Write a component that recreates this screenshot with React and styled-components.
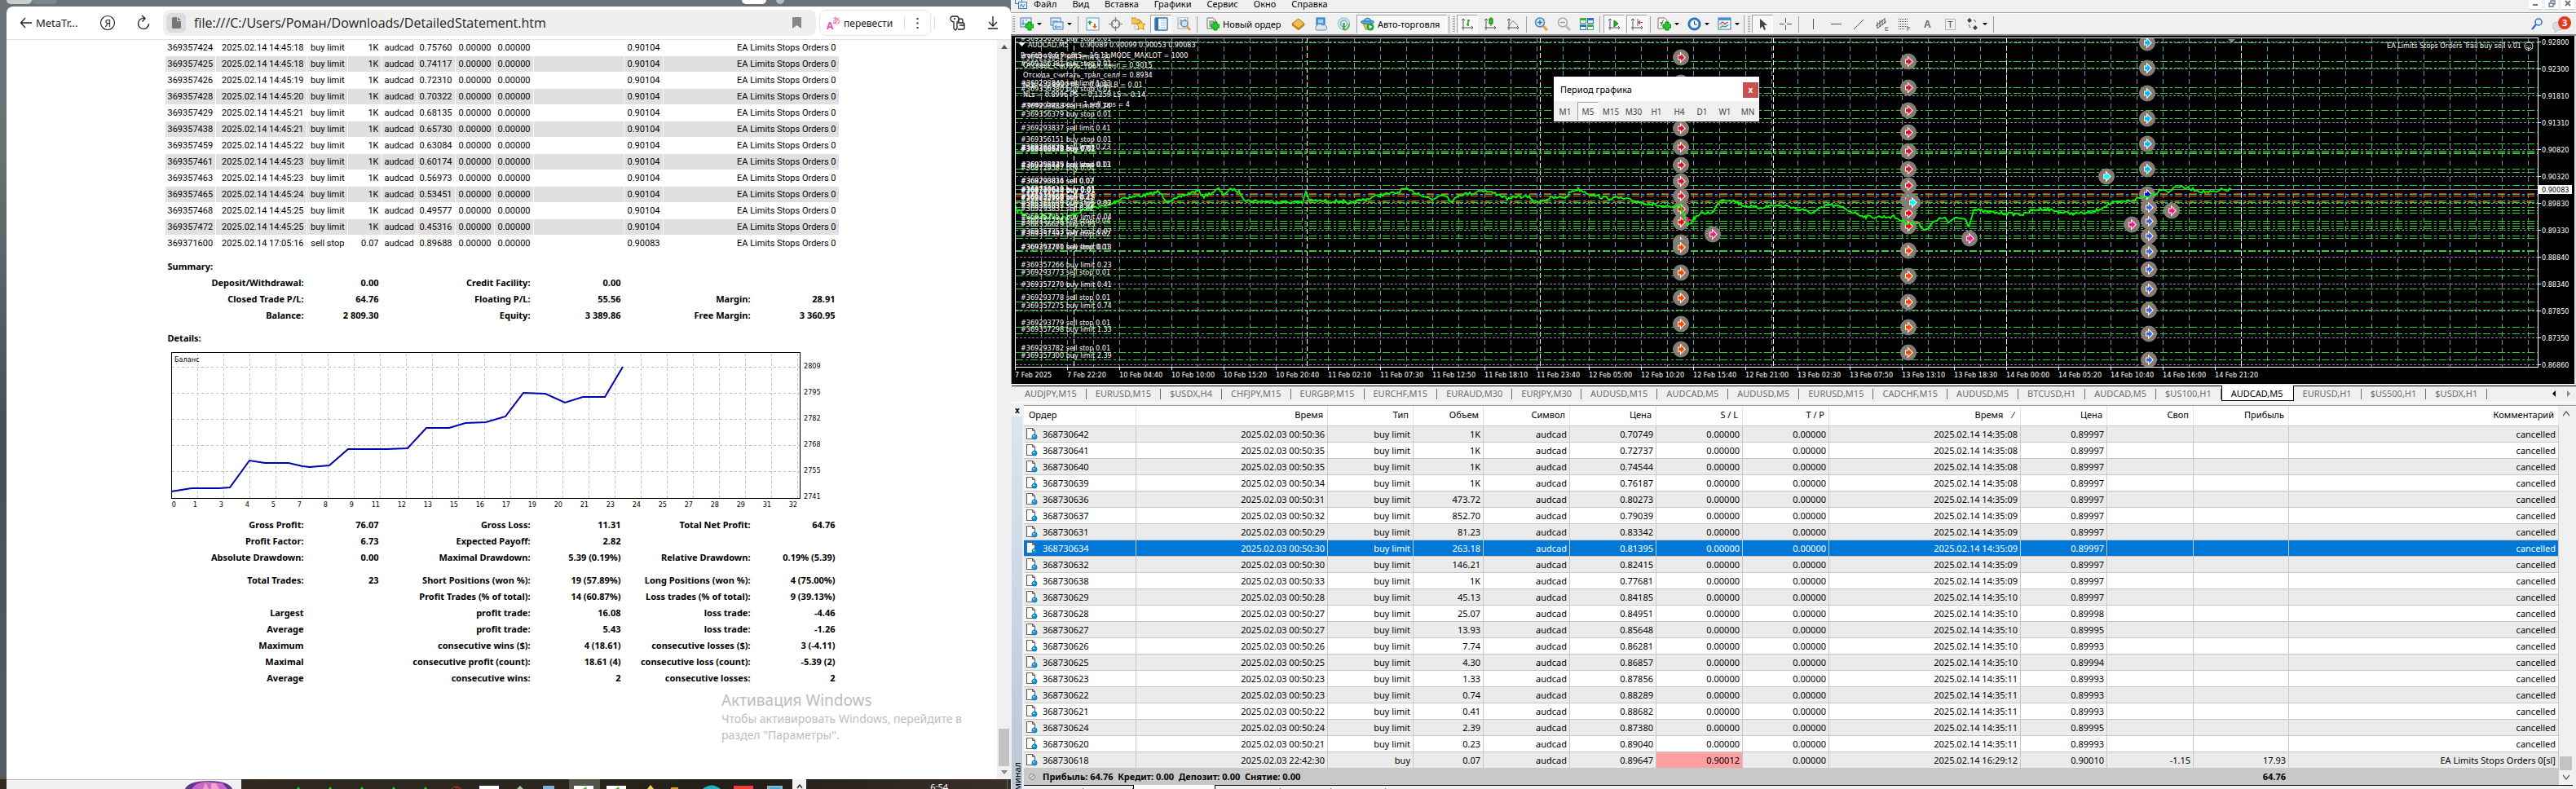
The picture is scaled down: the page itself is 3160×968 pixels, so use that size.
import React from "react";
import styled, { createGlobalStyle } from "styled-components";

const UI = `"Noto Sans", "Open Sans", sans-serif`;
const REPORT = `Roboto, "Liberation Sans", sans-serif`;
const TAHOMA = `"DejaVu Sans Condensed", "DejaVu Sans", sans-serif`;

const GlobalStyle = createGlobalStyle`
  * {
    box-sizing: border-box;
  }
  body {
    margin: 0;
    font-family: ${UI};
    font-size: 11px;
    color: #000;
    background: #f0f0f0;
  }
  button {
    font: inherit;
    color: inherit;
    background: none;
    border: 0;
    padding: 0;
  }
  svg {
    display: block;
    flex: none;
  }
`;

const Desktop = styled.div`
  display: flex;
  height: 100vh;
  overflow: hidden;
`;

/* ---------- browser ---------- */

const BrowserPane = styled.section`
  flex: 31 1 0;
  min-width: 0;
  position: relative;
  display: flex;
  flex-direction: column;
  background: linear-gradient(#6b7379, #6a7071 20%, #474e55 55%, #555c62);
`;

const TabStrip = styled.div`
  height: 8px;
  padding-left: 8px;
  display: flex;
  align-items: flex-start;
`;

const TabStub = styled.div`
  width: ${(p) => p.$w}px;
  height: 5px;
  margin-left: ${(p) => p.$gap || 0}px;
  border-radius: 0 0 6px 6px;
  background: ${(p) => p.$bg};
`;

const BrowserWindow = styled.div`
  flex: 1;
  min-height: 0;
  margin-left: 8px;
  display: flex;
  flex-direction: column;
  background: #fff;
  border-radius: 8px 8px 0 0;
`;

const AddressRow = styled.header`
  display: flex;
  align-items: center;
  height: 41px;
  padding: 0 15px 0 16px;
  border-bottom: 1px solid #e2e2e2;
`;

const BackLink = styled.a`
  display: flex;
  align-items: center;
  gap: 4px;
  width: 98px;
  font-size: 13px;
  color: #222;
  text-decoration: none;
`;

const NavButton = styled.button`
  display: flex;
  align-items: center;
  width: ${(p) => p.$w || 44}px;
`;

const AddressBar = styled.label`
  flex: 1;
  min-width: 0;
  display: flex;
  align-items: center;
  height: 32px;
  padding: 0 18px 0 4px;
  border-radius: 8px;
  background: #efefef;
`;

const FileBadge = styled.span`
  display: flex;
  align-items: center;
  justify-content: center;
  width: 24px;
  height: 24px;
  margin-right: 10px;
  border-radius: 6px;
  background: #dbdbdb;
`;

const AddressInput = styled.input`
  flex: 1;
  min-width: 0;
  height: 28px;
  padding: 0;
  border: 0;
  outline: 0;
  background: none;
  font-family: "Open Sans", "Noto Sans", sans-serif;
  font-size: 16px;
  color: #222;
`;

const TranslateBox = styled.div`
  display: flex;
  align-items: center;
  width: 137px;
  height: 32px;
  margin: 0 4px;
  padding-left: 8px;
  border: 1px solid #e4e4e4;
  border-radius: 8px;
`;

const TranslateButton = styled.button`
  display: flex;
  align-items: center;
  gap: 4px;
  width: 95px;
  font-size: 12px;
  color: #222;
`;

const MoreButton = styled.button`
  display: flex;
  justify-content: center;
  flex: 1;
  height: 18px;
  align-items: center;
  border-left: 1px solid #e0e0e0;
`;

const BarRule = styled.span`
  width: 1px;
  height: 16px;
  margin-right: 18px;
  background: #dcdcdc;
`;

const PageArea = styled.div`
  flex: 1;
  min-height: 0;
  display: flex;
`;

const PageBody = styled.main`
  flex: 1;
  min-width: 0;
  overflow: hidden;
`;

const Report = styled.div`
  width: 828px;
  margin: -1px auto 0;
  font-family: ${REPORT};
`;

const OrdersTable = styled.table`
  width: 100%;
  table-layout: fixed;
  border-spacing: 1px;
  text-align: right;
  td {
    height: 19px;
    padding: 0 3px;
    line-height: 19px;
    white-space: nowrap;
  }
  tr:nth-child(even) td {
    background: #e0e0e0;
  }
`;

const SectionTitle = styled.h2`
  margin: 8px 0 0;
  padding-left: 4px;
  font: bold 11px/20px ${UI};
`;

const StatsTable = styled.table`
  width: 826px;
  margin: ${(p) => (p.$spaced ? 8 : 0)}px 1px 0;
  table-layout: fixed;
  border-collapse: collapse;
  text-align: right;
  font: bold 11px/20px ${UI};
  td {
    height: 20px;
    padding: 0 4px 0 0;
    white-space: nowrap;
  }
`;

const BalanceSvg = styled.svg`
  width: 826px;
  margin-left: 1px;
  font: 9px ${TAHOMA};
`;

const ScrollTrack = styled.div`
  width: ${(p) => p.$w}px;
  display: flex;
  flex-direction: column;
  align-items: center;
  justify-content: space-between;
  padding: ${(p) => p.$pad}px 0;
  background: #f0f0f0;
`;

const ScrollEnd = styled.div`
  display: flex;
  flex-direction: column;
  align-items: center;
  gap: 5px;
`;

const ScrollThumb = styled.div`
  width: ${(p) => p.$w}px;
  height: ${(p) => p.$h}px;
  background: #c3c3c3;
`;

const Watermark = styled.div`
  position: absolute;
  left: 885px;
  bottom: 56px;
  color: #bdbdbd;
  font-size: 14px;
  line-height: 20px;
  white-space: nowrap;
`;

const WatermarkTitle = styled.div`
  font-size: 19px;
  line-height: 26px;
`;

const Taskbar = styled.footer`
  display: flex;
  height: 12px;
  overflow: hidden;
  background: linear-gradient(90deg, #35281f, #2b261f 50%, #231f18 75%, #3a2f28);
`;

const SearchPanel = styled.div`
  width: 288px;
  margin-left: 8px;
  padding-left: 219px;
  border-top: 1px solid #b5b5b5;
  background: #f1f1f1;
`;

const TaskIcons = styled.svg`
  flex: 1;
  width: 100%;
  min-width: 0;
`;

const Tray = styled.div`
  width: 268px;
  display: flex;
  color: #fff;
`;

const TrayToggle = styled.button`
  width: 17px;
  display: flex;
  justify-content: center;
  padding-top: 5px;
  background: #f1f1f1;
`;

const Clock = styled.time`
  flex: 1;
  padding: 2px 72px 0 0;
  text-align: right;
  line-height: 16px;
  margin-right: 4px;
  border-right: 1px solid #6d665f;
`;

/* ---------- terminal ---------- */

const TradePane = styled.section`
  flex: 48 1 0;
  min-width: 0;
  display: flex;
  flex-direction: column;
  background: #f0f0f0;
`;

const MenuBar = styled.nav`
  display: flex;
  align-items: center;
  gap: 8px;
  height: 16px;
  padding: 0 2px 6px 5px;
  overflow: hidden;
  border-bottom: 1px solid #a0a0a0;
`;

const MenuItems = styled.div`
  display: flex;
  gap: 19px;
`;

const MenuButton = styled.button`
  line-height: 14px;
`;

const WindowButtons = styled.div`
  display: flex;
  gap: 4px;
  margin-left: auto;
`;

const WindowButton = styled.button`
  display: flex;
  align-items: center;
  justify-content: center;
  width: 16px;
  height: 14px;
  background: #fff;
  border-bottom: 1px solid #d0d0d0;
`;

const ToolRow = styled.div`
  display: flex;
  align-items: center;
  height: 28px;
  border-top: 1px solid #fff;
  border-bottom: 2px solid #808080;
`;

const Grip = styled.span`
  width: ${(p) => (p.$line ? 9 : 6)}px;
  height: 22px;
  border-left: ${(p) => (p.$line ? "1px solid #a0a0a0" : "0")};
  background: repeating-linear-gradient(#a8a8a8 0 1px, transparent 1px 2px)
    ${(p) => (p.$line ? 4 : 2)}px 1px / 3px 20px no-repeat;
`;

const Separator = styled.span`
  width: 6px;
  height: 20px;
  background: linear-gradient(#a0a0a0, #a0a0a0) 2px 0 / 1px 100% no-repeat;
`;

const ToolButton = styled.button`
  display: flex;
  align-items: center;
  justify-content: center;
  width: 26px;
  height: 23px;
  margin: 0 1px;
  border: 1px solid;
  border-color: ${(p) =>
    p.$on ? "#a0a0a0 #fff #fff #a0a0a0" : "transparent"};
  background: ${(p) => (p.$on ? "#f8f8f8" : "none")};
`;

const DropButton = styled.button`
  display: flex;
  align-items: center;
  gap: 4px;
  width: 37px;
  padding-left: 5px;
`;

const TextButton = styled.button`
  display: flex;
  align-items: center;
  gap: 4px;
  height: 23px;
  width: ${(p) => p.$w}px;
  margin: 0 2px;
  padding-left: 4px;
  white-space: nowrap;
  border: 1px solid;
  border-color: ${(p) =>
    p.$on ? "#a0a0a0 #fff #fff #a0a0a0" : "transparent"};
  background: ${(p) => (p.$on ? "#f8f8f8" : "none")};
`;

const ToolRight = styled.div`
  display: flex;
  gap: 12px;
  margin: 0 6px 0 auto;
`;

const ChartArea = styled.div`
  position: relative;
  background: #000;
  border-left: 1px solid #a0a0a0;
  border-right: 2px solid #e3e3e3;
`;

const ChartSvg = styled.svg`
  width: 100%;
  font: 9px ${TAHOMA};
`;

const PeriodWindow = styled.div`
  position: absolute;
  left: 665px;
  top: 50px;
  width: 252px;
  background: #f0f0f0;
`;

const PeriodTitle = styled.div`
  display: flex;
  align-items: center;
  justify-content: space-between;
  height: 30px;
  padding: 0 1px 0 8px;
  background: #fff;
`;

const CloseButton = styled.button`
  width: 19px;
  height: 19px;
  margin-top: 3px;
  font: bold 10px/17px ${TAHOMA};
  color: #fff;
  background: #c75050;
`;

const PeriodRow = styled.div`
  display: grid;
  grid-template-columns: repeat(9, 1fr);
  height: 25px;
  padding: 1px 0;
`;

const PeriodButton = styled.button`
  margin: 0 1px;
  font-size: 10px;
  color: #444;
  border: 1px solid;
  border-color: ${(p) =>
    p.$on ? "#a0a0a0 #fff #fff #a0a0a0" : "transparent"};
  background: ${(p) => (p.$on ? "#f8f8f8" : "none")};
`;

const ChartTabs = styled.div`
  display: flex;
  align-items: stretch;
  height: 23px;
  margin-left: 1px;
  padding: 2px 7px 1px 5px;
  border-bottom: 1px solid #fff;
  background: linear-gradient(#000, #000) 0 2px / 100% 1px no-repeat;
`;

const ChartTab = styled.button`
  padding: 0 12px 0 11px;
  color: ${(p) => (p.$on ? "#000" : "#6d6d6d")};
  background: ${(p) =>
    p.$on
      ? "#fff"
      : "linear-gradient(#6d6d6d, #6d6d6d) 100% 4px / 1px 13px no-repeat"};
  border: ${(p) => (p.$on ? "1px solid #000" : "0")};
  border-top: 0;
`;

const TabScroll = styled.div`
  display: flex;
  align-items: center;
  gap: 14px;
  margin-left: auto;
`;

const TerminalBox = styled.div`
  flex: 1;
  min-height: 0;
  display: flex;
  padding-top: 3px;
`;

const SideTitle = styled.div`
  width: 16px;
  display: flex;
  flex-direction: column;
`;

const SideClose = styled.button`
  height: 14px;
  font: bold 10px/10px ${TAHOMA};
`;

const SideLabel = styled.div`
  flex: 1;
  display: flex;
  align-items: center;
  justify-content: flex-end;
  margin: 0 2px 0 1px;
  padding-bottom: 424px;
  writing-mode: vertical-rl;
  transform: rotate(180deg);
  overflow: hidden;
  white-space: nowrap;
  background: linear-gradient(0deg, #d9e5f3, #b9c7d6);
`;

const TerminalMain = styled.div`
  flex: 1;
  min-width: 0;
  border-top: 1px solid #a0a0a0;
`;

const TerminalBody = styled.div`
  display: flex;
  margin-right: 4px;
  border-bottom: 1px solid #000;
`;

const HistoryTable = styled.table`
  flex: 1;
  min-width: 0;
  table-layout: fixed;
  border-collapse: separate;
  border-spacing: 0;
  text-align: right;
  th,
  td {
    overflow: hidden;
    white-space: nowrap;
    border-right: 1px solid #c8c8c8;
    border-bottom: 1px solid #c8c8c8;
  }
  th {
    height: 25px;
    padding: 0 5px 0 6px;
    line-height: 22px;
    font-weight: normal;
    vertical-align: top;
    background: #fff;
    border-right-color: #e5e5e5;
  }
  th:first-child {
    text-align: left;
  }
  td {
    height: 20px;
    padding: 0 3px 1px 2px;
    line-height: 17px;
  }
  tfoot td {
    font-weight: bold;
    background: #c8c8c8;
  }
`;

const HistoryRow = styled.tr`
  color: ${(p) => (p.$selected ? "#fff" : "#000")};
  background: ${(p) => (p.$selected ? "#0078d7" : "#fff")};
  &:nth-child(odd) {
    background: #ebebeb;
  }
`;

const StopCell = styled.td`
  background: ${(p) => (p.$hit ? "#ffa0a0" : "none")};
`;

const OrderId = styled.span`
  display: flex;
  align-items: center;
  gap: 6px;
`;

const BottomTabs = styled.div`
  display: flex;
  height: 12px;
`;

const BottomTab = styled.button`
  width: ${(p) => p.$w}px;
  margin-top: ${(p) => (p.$on ? -1 : 0)}px;
  background: ${(p) =>
    p.$on
      ? "#fff"
      : "linear-gradient(#6d6d6d, #6d6d6d) 100% 3px / 1px 10px no-repeat"};
  border: solid #000;
  border-width: ${(p) => (p.$on ? "0 1px" : "0")};
`;

/* ---------- data ---------- */

const reportRows = [
  ["369357424", "14:45:18", "0.75760"],
  ["369357425", "14:45:18", "0.74117"],
  ["369357426", "14:45:19", "0.72310"],
  ["369357428", "14:45:20", "0.70322"],
  ["369357429", "14:45:21", "0.68135"],
  ["369357438", "14:45:21", "0.65730"],
  ["369357459", "14:45:22", "0.63084"],
  ["369357461", "14:45:23", "0.60174"],
  ["369357463", "14:45:23", "0.56973"],
  ["369357465", "14:45:24", "0.53451"],
  ["369357468", "14:45:25", "0.49577"],
  ["369357472", "14:45:25", "0.45316"],
  ["369371600", "17:05:16", "0.89688", "sell stop", "0.07", "0.90083"],
];
const reportCols = [61, 111, 49, 41, 42, 46, 47, 47, 110, 47, 215];
const statCols = [174, 92, 186, 111, 159, 104];

const summary = [
  ["Deposit/Withdrawal:", "0.00", "Credit Facility:", "0.00", "", ""],
  ["Closed Trade P/L:", "64.76", "Floating P/L:", "55.56", "Margin:", "28.91"],
  ["Balance:", "2 809.30", "Equity:", "3 389.86", "Free Margin:", "3 360.95"],
];
const profit = [
  ["Gross Profit:", "76.07", "Gross Loss:", "11.31", "Total Net Profit:", "64.76"],
  ["Profit Factor:", "6.73", "Expected Payoff:", "2.82", "", ""],
  ["Absolute Drawdown:", "0.00", "Maximal Drawdown:", "5.39 (0.19%)", "Relative Drawdown:", "0.19% (5.39)"],
];
const trades = [
  ["Total Trades:", "23", "Short Positions (won %):", "19 (57.89%)", "Long Positions (won %):", "4 (75.00%)"],
  ["", "", "Profit Trades (% of total):", "14 (60.87%)", "Loss trades (% of total):", "9 (39.13%)"],
  ["Largest", "", "profit trade:", "16.08", "loss trade:", "-4.46"],
  ["Average", "", "profit trade:", "5.43", "loss trade:", "-1.26"],
  ["Maximum", "", "consecutive wins ($):", "4 (18.61)", "consecutive losses ($):", "3 (-4.11)"],
  ["Maximal", "", "consecutive profit (count):", "18.61 (4)", "consecutive loss (count):", "-5.39 (2)"],
  ["Average", "", "consecutive wins:", "2", "consecutive losses:", "2"],
];

const balanceTicks = [1, 3, 4, 5, 7, 8, 9, 11, 12, 13, 15, 16, 17, 19, 20, 21, 23, 24, 25, 27, 28, 29, 31, 32];
const balanceLevels = [2809, 2795, 2782, 2768, 2755, 2741];
const balanceLine =
  "7,178 32,174 66,174 79,173 103,140 122,143 151,143 168,147 177,148 201,146 224,126 271,126 297,125 320,100 348,100 368,94 393,93 417,86 439,57 466,58 490,69 512,62 539,62 561,25";

const menus = ["Файл", "Вид", "Вставка", "Графики", "Сервис", "Окно", "Справка"];
const periods = ["M1", "M5", "M15", "M30", "H1", "H4", "D1", "W1", "MN"];
const chartTabs = [
  "AUDJPY,M15", "EURUSD,M15", "$USDX,H4", "CHFJPY,M15", "EURGBP,M15", "EURCHF,M15", "EURAUD,M30",
  "EURJPY,M30", "AUDUSD,M15", "AUDCAD,M5", "AUDUSD,M5", "EURUSD,M15", "CADCHF,M15", "AUDUSD,M5",
  "BTCUSD,H1", "AUDCAD,M5", "$US100,H1", "AUDCAD,M5", "EURUSD,H1", "$US500,H1", "$USDX,H1",
];
const activeTab = 17;

const timeLabels = [
  "7 Feb 2025", "7 Feb 22:20", "10 Feb 04:40", "10 Feb 10:00", "10 Feb 15:20", "10 Feb 20:40",
  "11 Feb 02:10", "11 Feb 07:30", "11 Feb 12:50", "11 Feb 18:10", "11 Feb 23:40", "12 Feb 05:00",
  "12 Feb 10:20", "12 Feb 15:40", "12 Feb 21:00", "13 Feb 02:30", "13 Feb 07:50", "13 Feb 13:10",
  "13 Feb 18:30", "14 Feb 00:00", "14 Feb 05:20", "14 Feb 10:40", "14 Feb 16:00", "14 Feb 21:20",
];
const priceLabels = [
  "0.92800", "0.92300", "0.91810", "0.91310", "0.90820", "0.90320", "0.89830",
  "0.89330", "0.88840", "0.88340", "0.87850", "0.87350", "0.86860",
];
const daySeparators = [77, 363, 649, 935, 1221, 1509];

const orderLevels = [
  8, 31, 39, 63, 70, 91, 101, 118, 132, 141, 143, 144, 163, 167, 183, 194, 202, 204, 210, 214, 217, 227,
  230, 233, 236, 245, 248, 263, 264, 286, 294, 310, 326, 336, 357, 365, 388, 397,
];
const stopLevels = [
  [193, "#ff2000", "9 9", 0],
  [195, "#0000ff", "5 13", 8],
  [196, "#ff4500", "9 3 3 3", 0],
  [203, "#e02000", "9 9", 4],
];

const orderLabels = [
  [6, "#369356382 buy stop 0.01"],
  [29, "#369293842 sell limit 2.39"],
  [37, "#369356381 buy stop 0.01"],
  [61, "#369293840 sell limit 1.33"],
  [68, "#369356380 buy stop 0.01"],
  [89, "#369293838 sell limit 0.74"],
  [99, "#369356379 buy stop 0.01"],
  [116, "#369293837 sell limit 0.41"],
  [130, "#369356151 buy stop 0.01"],
  [139, "#369293836 sell limit 0.23"],
  [141, "#368360578 buy 0.02"],
  [142, "#368486648 buy 0.01"],
  [161, "#369293835 sell limit 0.13"],
  [161, "#369356149 buy stop 0.01"],
  [165, "#368729587 buy 0.01"],
  [181, "#369293834 sell 0.07"],
  [181, "#368790816 sell 0.02"],
  [191, "#368730619 buy 0.01"],
  [192, "#368720548 buy 0.01"],
  [193, "#368361644 buy 0.01"],
  [200, "#368799688 sell 0.23"],
  [201, "#369033869 buy 0.13"],
  [202, "#368444168 sell 0.41"],
  [208, "#368361680 buy stop 0.02"],
  [211, "#368360033 sell 0.02"],
  [215, "#369293831 sell 0.02"],
  [225, "#369357252 buy limit 0.04"],
  [230, "#369357254 sell stop 0.04"],
  [234, "#368356629 buy 0.13"],
  [243, "#369357253 buy limit 0.07"],
  [246, "#369357392 sell stop 0.02"],
  [262, "#369293771 sell stop 0.01"],
  [262, "#369357260 buy limit 0.13"],
  [284, "#369357266 buy limit 0.23"],
  [293, "#369293773 sell stop 0.01"],
  [308, "#369357270 buy limit 0.41"],
  [324, "#369293778 sell stop 0.01"],
  [334, "#369357275 buy limit 0.74"],
  [355, "#369293779 sell stop 0.01"],
  [363, "#369357298 buy limit 1.33"],
  [386, "#369293782 sell stop 0.01"],
  [395, "#369357300 buy limit 2.39"],
];
const commentLines = [
  [11, 27, "ProfitB=0.6 ProfitS=-16.11 MODE_MAXLOT = 1000"],
  [14, 39, "Отсюда_считать_трал_лонг = 0.9015"],
  [14, 51, "Отсюда_считать_трал_селл = 0.8934"],
  [14, 63, "NLb = 0.8999 PB = 0.009 LB = 0.01"],
  [14, 75, "NLs = 0.8996 PS = 0.1259 LS = 0.14"],
  [14, 87, "колво_buy_pos = 1 sell_pos  = 4"],
];

const CRIMSON = "#dc143c";
const RED = "#ff0000";
const ORANGE = "#ff4500";
const PINK = "#ff1493";
const SKY = "#00bfff";
const CYAN = "#00ffff";
const ROYAL = "#4169e1";

const column = (x, color, ys) => ys.map((y) => [x, y, color]);
const markers = [
  ...column(821, CRIMSON, [26, 57, 86, 113, 136, 158, 178, 196]),
  ...column(821, RED, [212, 228]),
  [821, 253, PINK],
  ...column(821, ORANGE, [259, 290, 321, 353, 384]),
  [860, 243, PINK],
  ...column(1100, CRIMSON, [31, 63, 91, 118, 141, 163, 183, 201]),
  ...column(1100, RED, [217, 233]),
  ...column(1100, ORANGE, [263, 294, 326, 357, 388]),
  [1105, 204, CYAN],
  [1175, 248, PINK],
  ...column(1393, SKY, [8, 39, 70, 101, 132, 163]),
  [1393, 194, "#0000ff"],
  ...column(1395, ROYAL, [210, 227, 245, 264, 286, 310, 336, 365, 397]),
  [1343, 172, CYAN],
  [1423, 214, PINK],
  [1374, 231, PINK],
];

const pricePoints = [
  [5, 212], [15, 219], [24, 223], [36, 222], [53, 221], [68, 224], [78, 218], [91, 213], [100, 210],
  [116, 209], [127, 204], [135, 199], [152, 197], [167, 195], [180, 191], [190, 202], [200, 201],
  [213, 195], [228, 190], [236, 197], [254, 188], [259, 194], [271, 188], [280, 192], [287, 202],
  [310, 203], [339, 204], [357, 204], [361, 190], [365, 202], [390, 203], [407, 203], [413, 208],
  [419, 204], [436, 200], [453, 195], [472, 193], [480, 188], [499, 193], [516, 201], [529, 193],
  [541, 204], [548, 195], [567, 193], [575, 189], [596, 194], [611, 201], [617, 197], [636, 198],
  [642, 204], [661, 199], [680, 198], [686, 191], [695, 188], [712, 195], [728, 199], [745, 199],
  [766, 203], [787, 207], [808, 211], [821, 209], [829, 233], [838, 223], [846, 218], [861, 216],
  [869, 201], [882, 201], [897, 208], [916, 211], [933, 208], [954, 209], [966, 213], [983, 217],
  [1002, 207], [1021, 211], [1031, 216], [1048, 222], [1082, 222], [1097, 229], [1111, 230],
  [1121, 238], [1128, 231], [1143, 222], [1149, 229], [1160, 223], [1171, 225], [1174, 234],
  [1180, 213], [1196, 216], [1219, 218], [1242, 219], [1252, 214], [1267, 212], [1284, 216],
  [1292, 217], [1304, 218], [1325, 217], [1347, 206], [1368, 203], [1388, 198], [1402, 194],
  [1411, 187], [1421, 192], [1427, 184], [1447, 188], [1460, 191], [1478, 192], [1484, 189], [1497, 189],
];

// fills the gaps between the turning points with tick-sized noise
const buildPricePath = () => {
  let seed = 7;
  const rand = () => {
    seed = (seed * 16807) % 2147483647;
    return seed / 2147483647 - 0.5;
  };
  const out = [];
  for (let i = 0; i < pricePoints.length - 1; i++) {
    const [x1, y1] = pricePoints[i];
    const [x2, y2] = pricePoints[i + 1];
    for (let x = x1; x < x2; x += 2) {
      const t = (x - x1) / (x2 - x1);
      const amp = x < 80 ? 7 : 4;
      out.push(`${x},${(y1 + (y2 - y1) * t + rand() * amp).toFixed(1)}`);
    }
  }
  return out.join(" ");
};
const pricePath = buildPricePath();

const T = "00:50:";
const history = [
  ["368730642", T + 36, "1K", "0.70749", "14:35:08", "0.89997"],
  ["368730641", T + 35, "1K", "0.72737", "14:35:08", "0.89997"],
  ["368730640", T + 35, "1K", "0.74544", "14:35:08", "0.89997"],
  ["368730639", T + 34, "1K", "0.76187", "14:35:08", "0.89997"],
  ["368730636", T + 31, "473.72", "0.80273", "14:35:09", "0.89997"],
  ["368730637", T + 32, "852.70", "0.79039", "14:35:09", "0.89997"],
  ["368730631", T + 29, "81.23", "0.83342", "14:35:09", "0.89997"],
  ["368730634", T + 30, "263.18", "0.81395", "14:35:09", "0.89997"],
  ["368730632", T + 30, "146.21", "0.82415", "14:35:09", "0.89997"],
  ["368730638", T + 33, "1K", "0.77681", "14:35:09", "0.89997"],
  ["368730629", T + 28, "45.13", "0.84185", "14:35:10", "0.89997"],
  ["368730628", T + 27, "25.07", "0.84951", "14:35:10", "0.89998"],
  ["368730627", T + 27, "13.93", "0.85648", "14:35:10", "0.89995"],
  ["368730626", T + 26, "7.74", "0.86281", "14:35:10", "0.89993"],
  ["368730625", T + 25, "4.30", "0.86857", "14:35:10", "0.89994"],
  ["368730623", T + 23, "1.33", "0.87856", "14:35:11", "0.89993"],
  ["368730622", T + 23, "0.74", "0.88289", "14:35:11", "0.89993"],
  ["368730621", T + 22, "0.41", "0.88682", "14:35:11", "0.89993"],
  ["368730624", T + 24, "2.39", "0.87380", "14:35:11", "0.89995"],
  ["368730620", T + 21, "0.23", "0.89040", "14:35:11", "0.89993"],
  ["368730618", "22:42:30", "0.07", "0.89647", "16:29:12", "0.90010"],
];
const selectedOrder = "368730634";
const historyCols = [138, 235, 105, 86, 106, 106, 106, 106, 235, 106, 106, 117];
const historyHeads = [
  "Ордер", "Время", "Тип", "Объем", "Символ", "Цена", "S / L", "T / P",
  "Время\u00a0\u00a0\u00a0\u00a0⁄\u00a0", "Цена", "Своп", "Прибыль", "Комментарий",
];

/* ---------- icons ---------- */

const Plus = ({ x = 7, y = 6 }) => (
  <path
    d={`M${x + 3} ${y}h4v3h3v4h-3v3h-4v-3h-3v-4h3z`}
    fill="#1fd01f"
    stroke="#0a8a0a"
    strokeWidth="1"
  />
);

const axes = <path d="M3 2v14M1 4l2-2 2 2M1 13h14M13 11l2 2-2 2" fill="none" stroke="#555" />;

const glyphs = {
  newChart: (
    <>
      <rect x="1" y="1" width="13" height="11" fill="#e6f2fc" stroke="#3b7cc0" />
      <path d="M4 3v7M2 8h9M7 4l2-1" fill="none" stroke="#3b7cc0" />
      <Plus />
    </>
  ),
  profiles: (
    <>
      <rect x="1" y="1" width="12" height="9" fill="#e6f2fc" stroke="#3b7cc0" />
      <rect x="4" y="6" width="12" height="9" fill="#dcecfa" stroke="#3b7cc0" />
      <path d="M3 5h7M6 12h8M8 10l-2 2 2 2" fill="none" stroke="#3b7cc0" />
    </>
  ),
  market: (
    <>
      <rect x="1" y="1" width="15" height="15" fill="#f4faff" stroke="#5b9bd5" />
      <path d="M5 4l3 3H6v2H4V7H2z" fill="#19b219" />
      <path d="M11 14l-3-3h2V8h2v3h2z" fill="#f05a28" />
    </>
  ),
  target: (
    <>
      <circle cx="8.5" cy="8.5" r="5" fill="none" stroke="#777" strokeWidth="1.5" />
      <path d="M8.5 0v6M8.5 11v6M0 8.5h6M11 8.5h6" stroke="#777" strokeWidth="1.2" />
    </>
  ),
  favorites: (
    <>
      <path d="M0 3V1h5l1 2h4v5H0z" fill="#f0c75e" stroke="#b98a2c" />
      <path d="M4 9v6h4" fill="none" stroke="#888" strokeDasharray="1 1" />
      <path d="M11.5 4l1.7 4 4 .3-3 2.8 1 4.4-3.7-2.3-3.7 2.3 1-4.4-3-2.8 4-.3z" fill="#ffd94a" stroke="#c08a1a" />
    </>
  ),
  navigator: (
    <>
      <rect x="1" y="1" width="15" height="15" rx="1" fill="#f4faff" stroke="#2f6fb5" strokeWidth="1.4" />
      <rect x="1" y="1" width="4" height="15" fill="#2f6fb5" />
      <path d="M8 4h6M8 7h6M8 10h6M8 13h6" stroke="#9cc0e4" />
    </>
  ),
  tester: (
    <>
      <rect x="1" y="0" width="12" height="14" fill="#eef2f5" stroke="#9aa5ad" />
      <path d="M4 3v7M4 4h2M10 2v5" stroke="#7a8a95" />
      <circle cx="9" cy="8" r="4" fill="#cfe6f8" stroke="#5a92c0" strokeWidth="1.5" />
      <path d="M12 11l4 5" stroke="#d9a23a" strokeWidth="2.5" />
    </>
  ),
  order: (
    <>
      <path d="M2 1h7l3 3v10H2z" fill="#fff" stroke="#666" />
      <path d="M4 5h6M4 7h6M4 9h4M4 11h4" stroke="#555" />
      <Plus />
    </>
  ),
  book: (
    <>
      <path d="M1 8l8-6 7 6-7 6z" fill="#f0bd4e" stroke="#a8741a" />
      <path d="M1 8v2l8 6 7-6V8l-7 6z" fill="#c98a22" stroke="#a8741a" strokeWidth=".6" />
    </>
  ),
  hosting: (
    <>
      <rect x="3" y="1" width="10" height="9" fill="#49a3ea" stroke="#1b6db8" />
      <path d="M5 4h6M5 6h6" stroke="#fff" />
      <path d="M3 16a3 3 0 010-5 4 4 0 017-1 3 3 0 014 6z" fill="#dde6f2" stroke="#7288ad" />
    </>
  ),
  signals: (
    <>
      <circle cx="8.5" cy="8" r="7" fill="none" stroke="#9fc3d8" strokeWidth="1.5" />
      <circle cx="8.5" cy="8" r="4" fill="none" stroke="#6aa9c5" strokeWidth="1.5" />
      <path d="M8.5 7v9" stroke="#3aa83a" strokeWidth="2.5" />
      <path d="M9 16a7 7 0 006-8" fill="none" stroke="#4cae4c" strokeWidth="1.5" />
    </>
  ),
  robot: (
    <>
      <path d="M3 7h11l-2 8H6z" fill="#f1c550" stroke="#b58a20" />
      <ellipse cx="8.5" cy="6" rx="8" ry="2.5" fill="#58a6d8" stroke="#2a78ac" />
      <path d="M4.5 5a4 4 0 018 0z" fill="#7cc0e8" stroke="#2a78ac" />
      <circle cx="12" cy="12" r="4.5" fill="#20a838" />
      <path d="M10.5 9.5v5l4-2.5z" fill="#fff" />
    </>
  ),
  bars: (
    <>
      {axes}
      <path d="M9 3v8M7 9h2M9 4h2" stroke="#119a11" strokeWidth="1.5" />
    </>
  ),
  candles: (
    <>
      {axes}
      <path d="M9 0v11" stroke="#0a7a0a" />
      <rect x="7" y="2" width="4" height="6" fill="#22c522" stroke="#0a7a0a" />
    </>
  ),
  line: (
    <>
      {axes}
      <path d="M3 11c2-2 3-6 5-6s3 4 6 5" fill="none" stroke="#3aa83a" />
    </>
  ),
  zoomIn: (
    <>
      <circle cx="7" cy="6.5" r="5.5" fill="#d8ecfb" stroke="#3a86c8" strokeWidth="1.5" />
      <path d="M4 6.5h6M7 3.5v6" stroke="#2a6cae" strokeWidth="1.5" />
      <path d="M11 11l5 5" stroke="#d9a23a" strokeWidth="3" />
    </>
  ),
  zoomOut: (
    <>
      <circle cx="7" cy="6.5" r="5.5" fill="#f2f2f2" stroke="#aaa" strokeWidth="1.5" />
      <path d="M4 6.5h6" stroke="#999" strokeWidth="1.5" />
      <path d="M11 11l5 5" stroke="#bbb" strokeWidth="3" />
    </>
  ),
  tile: (
    <>
      <path d="M0 1h8v7H0zM9 9h8v7H9z" fill="#3fb03f" />
      <path d="M9 1h8v7H9zM0 9h8v7H0z" fill="#2f6fd0" />
      <path d="M1 4h6v3H1zM10 4h6v3h-6zM1 12h6v3H1zM10 12h6v3h-6z" fill="#e6f2fc" />
    </>
  ),
  autoScroll: (
    <>
      {axes}
      <path d="M8 4l5 4-5 4z" fill="#22b822" stroke="#0a7a0a" />
    </>
  ),
  shift: (
    <>
      {axes}
      <path d="M9 2v9" stroke="#3a6ea5" />
      <path d="M15 6.5h-5M12 4.5l-2 2 2 2" fill="none" stroke="#c8402a" strokeWidth="1.2" />
    </>
  ),
  indicators: (
    <>
      <path d="M1 1h8l3 3v10H1z" fill="#fff" stroke="#777" />
      <path d="M4 11c2 0 1-7 4-7M3 7h4" fill="none" stroke="#444" />
      <Plus />
    </>
  ),
  clock: (
    <>
      <circle cx="8.5" cy="8.5" r="7.5" fill="#2f7fd6" stroke="#1c569c" />
      <circle cx="8.5" cy="8.5" r="5" fill="#f2f8ff" />
      <path d="M8.5 5v4h3" fill="none" stroke="#333" />
    </>
  ),
  template: (
    <>
      <rect x="1" y="1" width="15" height="14" fill="#fff" stroke="#2f6fb5" />
      <rect x="1" y="1" width="15" height="3" fill="#4a90d9" />
      <path d="M3 8l3-2 3 2 4-2" fill="none" stroke="#a0402a" strokeWidth="1.2" />
      <path d="M3 13l3-2 3 1 4-2" fill="none" stroke="#2f9a4a" strokeWidth="1.2" />
      <path d="M1 9.5h15" stroke="#9cc0e4" />
    </>
  ),
  cursor: <path d="M5 2v12l3-3 2 5 2-1-2-5h4z" fill="#444" />,
  cross: <path d="M8.5 1v6M8.5 10v6M1 8.5h6M10 8.5h6" stroke="#555" strokeWidth="1" />,
  vline: <path d="M8.5 2v13" stroke="#555" />,
  hline: <path d="M2 8.5h13" stroke="#555" />,
  trend: <path d="M2 15L14 3" stroke="#555" />,
  channel: (
    <>
      <path d="M1 11l11-9M3 14L14 5M3 6v8M6 4v8M9 3v7M12 1v7" stroke="#555" />
      <text x="12" y="17" fontSize="7" fill="#444">E</text>
    </>
  ),
  fibo: (
    <>
      <path d="M1 2.5h12M1 5.5h12M1 8.5h12M1 11.5h12M1 14.5h8" stroke="#444" strokeDasharray="1 1" />
      <text x="11" y="17" fontSize="7" fill="#444">F</text>
    </>
  ),
  text: <text x="4" y="13" fontSize="12" fontWeight="bold" fill="#666">A</text>,
  label: (
    <>
      <rect x="2.5" y="2.5" width="12" height="13" fill="none" stroke="#777" strokeDasharray="1 1" />
      <text x="5" y="13" fontSize="11" fill="#444">T</text>
    </>
  ),
  shapes: (
    <>
      <path d="M5 1l3 3-3 3-3-3zM12 10l3 3-3 3-3-3z" fill="#444" />
      <path d="M10 3l3 3M4 9l2 4" stroke="#555" />
    </>
  ),
};

const Icon = ({ name }) => (
  <svg width="17" height="17" viewBox="0 0 17 17" fontFamily="Liberation Sans, sans-serif">
    {glyphs[name]}
  </svg>
);

const Caret = () => (
  <svg width="6" height="3" viewBox="0 0 6 3">
    <path d="M0 0h6L3 3z" />
  </svg>
);

const Tool = ({ name, on }) => (
  <ToolButton $on={on} aria-label={name}>
    <Icon name={name} />
  </ToolButton>
);

const Drop = ({ name }) => (
  <DropButton aria-label={name}>
    <Icon name={name} />
    <Caret />
  </DropButton>
);

const Chevron = ({ d, color = "#555", w = 10, h = 6 }) => (
  <svg width={w} height={h} viewBox={`0 0 ${w} ${h}`}>
    <path d={d} fill={color} />
  </svg>
);

/* ---------- parts ---------- */

const Cols = ({ widths }) => (
  <colgroup>
    {widths.map((w, i) => (
      <col key={i} style={{ width: w }} />
    ))}
  </colgroup>
);

const Stats = ({ rows, spaced }) => (
  <StatsTable $spaced={spaced}>
    <Cols widths={statCols} />
    <tbody>
      {rows.map((row, i) => (
        <tr key={i}>
          {row.map((cell, j) => (
            <td key={j}>{cell}</td>
          ))}
        </tr>
      ))}
    </tbody>
  </StatsTable>
);

const BalanceChart = () => (
  <BalanceSvg viewBox="0 0 826 209">
    <g stroke="#c0c0c0" strokeDasharray="3 3">
      {balanceTicks.map((t, i) => (
        <path key={t} d={`M${39.5 + i * 32} 9V186`} />
      ))}
      {balanceLevels.slice(0, 5).map((l, i) => (
        <path key={l} d={`M8 ${25.5 + i * 32}H778`} />
      ))}
    </g>
    <rect x="7.5" y="7.5" width="771" height="179" fill="none" stroke="#000" />
    <g textAnchor="end">
      <text x="13" y="197">0</text>
      {balanceTicks.map((t, i) => (
        <text key={t} x={39 + i * 32} y="197">{t}</text>
      ))}
    </g>
    {balanceLevels.map((l, i) => (
      <text key={l} x="783" y={27 + i * 32}>{l}</text>
    ))}
    <text x="11" y="19">Баланс</text>
    <polyline points={balanceLine} fill="none" stroke="#0000b0" strokeWidth="2" />
  </BalanceSvg>
);

const Browser = () => (
  <BrowserPane>
    <TabStrip>
      <TabStub $w={31} $bg="#c9cccd" />
      <TabStub $w={31} $bg="#7f868a" />
      <TabStub $w={30} $gap={840} $bg="#ffffff" />
      <TabStub $w={10} $gap={12} $bg="#b8bcbf" />
    </TabStrip>
    <BrowserWindow>
      <AddressRow>
        <BackLink href="#back">
          <svg width="16" height="14" viewBox="0 0 16 14" fill="none" stroke="#222" strokeWidth="1.3">
            <path d="M15 7H2M7 1L1.5 7 7 13" />
          </svg>
          MetaTr...
        </BackLink>
        <NavButton aria-label="Яндекс" $w={45}>
          <svg width="20" height="20" viewBox="0 0 20 20">
            <circle cx="10" cy="10" r="8.5" fill="none" stroke="#222" strokeWidth="1.2" />
            <text x="6.500" y="14.500" fontSize="12" fill="#222">Я</text>
          </svg>
        </NavButton>
        <NavButton aria-label="Обновить" $w={33}>
          <svg width="18" height="20" viewBox="0 0 18 20" fill="none" stroke="#222" strokeWidth="1.4">
            <path d="M10 4.5A6.5 6.5 0 1015.5 11M7 1l4 3.5-3.5 4" />
          </svg>
        </NavButton>
        <AddressBar>
          <FileBadge>
            <svg width="11" height="14" viewBox="0 0 11 14">
              <path d="M0 1.5Q0 0 1.5 0H6v5h5v7.5q0 1.5-1.5 1.5h-8Q0 14 0 12.5zM7 0l4 4H7z" fill="#777" />
            </svg>
          </FileBadge>
          <AddressInput
            aria-label="Адрес"
            defaultValue="file:///C:/Users/Роман/Downloads/DetailedStatement.htm"
          />
          <svg width="11" height="14" viewBox="0 0 11 14">
            <path d="M0 1q0-1 1-1h9q1 0 1 1v13L5.5 10 0 14z" fill="#888" />
          </svg>
        </AddressBar>
        <TranslateBox>
          <TranslateButton>
            <svg width="17" height="17" viewBox="0 0 17 17">
              <text x="0" y="16" fontSize="12" fontWeight="bold" fill="#e84fb8">A</text>
              <text x="7" y="9" fontSize="10" fontFamily="Noto Sans CJK JP" fill="#f0559a">あ</text>
            </svg>
            перевести
          </TranslateButton>
          <MoreButton aria-label="Ещё">
            <svg width="3" height="13" viewBox="0 0 3 13">
              <path d="M.5 0h2v2h-2zM.5 5.5h2v2h-2zM.5 11h2v2h-2z" fill="#333" />
            </svg>
          </MoreButton>
        </TranslateBox>
        <BarRule />
        <NavButton aria-label="Пароли" $w={46}>
          <svg width="19" height="19" viewBox="0 0 19 19" fill="none" stroke="#222" strokeWidth="1.3">
            <path d="M1 4q0-3 3-3h4q3 0 3 3v1q0 2-2 3v8l-2 2-2-2V8Q1 7 1 4zM5 4h2" />
            <path d="M10 9h6q2 0 2 2v4q0 2-2 2h-6M11 9V6q0-2 2.5-2T16 6v3M12 12h6" />
          </svg>
        </NavButton>
        <NavButton aria-label="Загрузки" $w={14}>
          <svg width="14" height="16" viewBox="0 0 14 16" fill="none" stroke="#222" strokeWidth="1.3">
            <path d="M7 0v12M2 7l5 5 5-5M1 15h12" />
          </svg>
        </NavButton>
      </AddressRow>
      <PageArea>
        <PageBody>
          <Report>
            <OrdersTable>
              <Cols widths={reportCols} />
              <tbody>
                {reportRows.map(([id, time, price, type = "buy limit", size = "1K", market = "0.90104"]) => (
                  <tr key={id}>
                    <td>{id}</td>
                    <td>2025.02.14 {time}</td>
                    <td>{type}</td>
                    <td>{size}</td>
                    <td>audcad</td>
                    <td>{price}</td>
                    <td>0.00000</td>
                    <td>0.00000</td>
                    <td />
                    <td>{market}</td>
                    <td>EA Limits Stops Orders 0</td>
                  </tr>
                ))}
              </tbody>
            </OrdersTable>
            <SectionTitle>Summary:</SectionTitle>
            <Stats rows={summary} />
            <SectionTitle>Details:</SectionTitle>
            <BalanceChart />
            <Stats rows={profit} />
            <Stats rows={trades} spaced />
          </Report>
        </PageBody>
        <ScrollTrack $w={17} $pad={6}>
          <Chevron d="M0 5L4 0l4 5z" w={8} h={5} />
          <ScrollEnd>
            <ScrollThumb $w={13} $h={46} />
            <Chevron d="M0 0h8L4 5z" w={8} h={5} color="#888" />
          </ScrollEnd>
        </ScrollTrack>
      </PageArea>
    </BrowserWindow>
    <Watermark>
      <WatermarkTitle>Активация Windows</WatermarkTitle>
      Чтобы активировать Windows, перейдите в
      <br />
      раздел "Параметры".
    </Watermark>
    <Taskbar>
      <SearchPanel>
        <svg width="58" height="11" viewBox="0 0 58 11">
          <path d="M0 11Q4 1 29 1t29 10z" fill="#5b3a8c" />
          <path d="M8 11Q12 3 26 2l20 2 6 7z" fill="#c868c8" />
          <path d="M22 11l3-8 4 8zM32 11V4h6l4 7z" fill="#f4a0c8" />
        </svg>
      </SearchPanel>
      <TaskIcons viewBox="0 0 676 12" preserveAspectRatio="xMinYMin slice">
        {[70, 109, 148, 187, 226].map((x) => (
          <path key={x} d={`M${x - 2} 12l2-3 2 3z`} fill="#18d818" />
        ))}
        <path d="M258 12q6-6 12 0M260 9l8 2M264 8v4" stroke="#a03a1c" fill="none" />
        <path d="M292 8h24v4h-24z" fill="#fff" />
        <path d="M338 12l4-4 4 4z" fill="#9cc89c" />
        <path d="M370 8h14v4h-14z" fill="#7fb0d8" />
        <path d="M402 0h38v12h-38z" fill="#55564a" />
        <path d="M408 8h24v4h-24zM448 8h24v4h-24z" fill="#fff" />
        <path d="M419 12l4-3 1 3zM459 12l4-3 1 3z" fill="#58b838" />
        <path d="M498 12l4-5 4 5z" fill="#f0d848" />
        <path d="M527 10h9v2h-9z" fill="#d8a030" />
        <path d="M566 12q11-9 22 0z" fill="#28b0c8" />
        <path d="M604 8h24v4h-24z" fill="#f04030" />
        <path d="M645 8h19v4h-19z" fill="#88b8c8" />
        <path d="M648 10h13v2h-13z" fill="#48a8d8" />
      </TaskIcons>
      <Tray>
        <TrayToggle aria-label="Скрытые значки">
          <svg width="8" height="7" viewBox="0 0 8 7" fill="none" stroke="#333" strokeWidth="1.5">
            <path d="M1 6l3-4 3 4" />
          </svg>
        </TrayToggle>
        <Clock>6:54</Clock>
      </Tray>
    </Taskbar>
  </BrowserPane>
);

const Marker = ({ x, y, color }) => (
  <g transform={`translate(${x} ${y})`}>
    <circle r="9.5" fill="#8b7969" stroke="#778899" strokeWidth="1" />
    <path
      d="M-3-2h3v-2.500L4.500 0 0 4.500V2h-3z"
      fill={color}
      stroke="#fff"
      strokeWidth="2"
      paintOrder="stroke"
    />
  </g>
);

const PriceChart = () => (
  <ChartSvg viewBox="0 0 1917 427">
    <defs>
      <clipPath id="plot">
        <rect x="5" y="3" width="1867" height="403" />
      </clipPath>
    </defs>
    <g clipPath="url(#plot)" shapeRendering="crispEdges">
      <g stroke="#778899">
        {Array.from({ length: 58 }, (_, i) => (
          <path key={i} d={`M${36.5 + i * 32} 3V406`} strokeDasharray="6 4" />
        ))}
        {priceLabels.map((p, i) => (
          <path key={p} d={`M5 ${7.5 + i * 33}H1872`} strokeDasharray="3 2" />
        ))}
        <path d="M5 188.5H1872" />
      </g>
      {daySeparators.map((x) => (
        <path key={x} d={`M${x - 0.5} 3V406`} stroke="#fff" strokeDasharray="6 3" />
      ))}
      <g stroke="#32cd32" strokeDasharray="9 3 3 3">
        {orderLevels.map((y) => (
          <path key={y} d={`M5 ${y + 0.5}H1872`} />
        ))}
      </g>
      {stopLevels.map(([y, color, dash, offset]) => (
        <path
          key={y}
          d={`M5 ${y + 0.5}H1872`}
          stroke={color}
          strokeDasharray={dash}
          strokeDashoffset={offset}
        />
      ))}
    </g>
    <g clipPath="url(#plot)">
      {markers.map(([x, y, color], i) => (
        <Marker key={i} x={x} y={y + 0.5} color={color} />
      ))}
      <path d="M824 226h10M829 222v8M1106 229h9" stroke={PINK} strokeWidth="2" />
      <polyline points={pricePath} fill="none" stroke="#00ff00" strokeWidth="1.8" />
      <g fill="#fff">
        {orderLabels.map(([y, label]) => (
          <text key={label} x="11" y={y}>{label}</text>
        ))}
        {commentLines.map(([x, y, label]) => (
          <text key={label} x={x} y={y}>{label}</text>
        ))}
        <path d="M8 8h9l-4.500 5z" />
        <text x="20" y="14">AUDCAD,M5</text>
        <text x="84" y="14">0.90089 0.90099 0.90053 0.90083</text>
        <text x="1852" y="15" textAnchor="end">EA Limits Stops Orders Trail buy sell v.01</text>
      </g>
    </g>
    <circle cx="1861" cy="12.500" r="5" fill="none" stroke="#fff" />
    <path d="M1859 11v1M1863 11v1M1858 14q3 3 6 0" fill="none" stroke="#fff" />
    <path d="M1492 4h9l-4.500 5z" fill="#778899" />
    <rect x="4.500" y="2.500" width="1868" height="404" fill="none" stroke="#fff" />
    <g fill="#fff">
      {priceLabels.map((p, i) => (
        <React.Fragment key={p}>
          <path d={`M1873 ${7 + i * 33}h3v1h-3z`} />
          <text x="1877" y={11 + i * 33}>{p}</text>
        </React.Fragment>
      ))}
      {timeLabels.map((t, i) => (
        <React.Fragment key={t}>
          <path d={`M${4 + i * 64} 407v3h1v-3z`} />
          <text x={4 + i * 64} y="419">{t}</text>
        </React.Fragment>
      ))}
      <rect x="1873" y="183" width="41" height="11" />
    </g>
    <text x="1877" y="192">0.90083</text>
  </ChartSvg>
);

const OrderIcon = () => (
  <svg width="15" height="16" viewBox="0 0 15 16">
    <path d="M1.5 1.5h7l3 3v10h-10z" fill="#fff" stroke="#666" strokeWidth="1.2" />
    <path d="M8.5 1.5v3h3" fill="none" stroke="#666" />
    <circle cx="11" cy="12" r="3" fill="#1b9be0" stroke="#1470b0" />
    <circle cx="10" cy="11" r="1" fill="#a8dcf8" />
  </svg>
);

const Trading = () => (
  <TradePane>
    <MenuBar>
      <svg width="15" height="14" viewBox="0 0 15 14" fill="#e8f2fc" stroke="#3b7cc0">
        <rect x=".5" y=".5" width="8" height="6" />
        <rect x="4.500" y="4.500" width="10" height="8" />
        <path d="M6 11l2-4 2 4 2-4" fill="none" />
      </svg>
      <MenuItems>
        {menus.map((m) => (
          <MenuButton key={m}>{m}</MenuButton>
        ))}
      </MenuItems>
      <WindowButtons>
        <WindowButton aria-label="Свернуть">
          <svg width="8" height="8" viewBox="0 0 8 8">
            <path d="M1 5h6v2H1z" fill="#667788" />
          </svg>
        </WindowButton>
        <WindowButton aria-label="Восстановить">
          <svg width="9" height="9" viewBox="0 0 9 9" fill="none" stroke="#667788" strokeWidth="1.3">
            <path d="M3 3V1h5v4H6M1 4h5v4H1z" />
          </svg>
        </WindowButton>
        <WindowButton aria-label="Закрыть">
          <svg width="8" height="8" viewBox="0 0 8 8" stroke="#667788" strokeWidth="2">
            <path d="M1 1l6 6M7 1L1 7" />
          </svg>
        </WindowButton>
      </WindowButtons>
    </MenuBar>
    <ToolRow>
      <Grip />
      <Drop name="newChart" />
      <Drop name="profiles" />
      <Separator />
      <Tool name="market" />
      <Tool name="target" />
      <Tool name="favorites" />
      <Tool name="navigator" on />
      <Tool name="tester" />
      <Separator />
      <TextButton $w={102}>
        <Icon name="order" />
        Новый ордер
      </TextButton>
      <Tool name="book" />
      <Tool name="hosting" />
      <Tool name="signals" />
      <TextButton $w={111} $on>
        <Icon name="robot" />
        Авто-торговля
      </TextButton>
      <Grip $line />
      <Tool name="bars" on />
      <Tool name="candles" />
      <Tool name="line" />
      <Separator />
      <Tool name="zoomIn" />
      <Tool name="zoomOut" />
      <Tool name="tile" />
      <Separator />
      <Tool name="autoScroll" on />
      <Tool name="shift" on />
      <Separator />
      <Drop name="indicators" />
      <Drop name="clock" />
      <Drop name="template" />
      <Grip $line />
      <Tool name="cursor" on />
      <Tool name="cross" />
      <Separator />
      <Tool name="vline" />
      <Tool name="hline" />
      <Tool name="trend" />
      <Tool name="channel" />
      <Tool name="fibo" />
      <Tool name="text" />
      <Tool name="label" />
      <Drop name="shapes" />
      <Separator />
      <ToolRight>
        <button aria-label="Поиск">
          <svg width="14" height="17" viewBox="0 0 14 17" fill="none">
            <circle cx="9" cy="6" r="4" stroke="#3a66d0" strokeWidth="1.5" fill="#eef4ff" />
            <path d="M6 9l-5 6" stroke="#3a66d0" strokeWidth="2.2" />
          </svg>
        </button>
        <button aria-label="Сообщения">
          <svg width="23" height="20" viewBox="0 0 23 20">
            <path d="M0 12q0-5 7-5t7 5-7 5l-4 3v-4q-3-1-3-4z" fill="#dcdcdc" stroke="#aaa" strokeWidth=".6" />
            <circle cx="15" cy="8" r="8" fill="#e03a20" />
            <text x="12" y="12" fontSize="11" fontWeight="bold" fill="#fff">3</text>
          </svg>
        </button>
      </ToolRight>
    </ToolRow>
    <ChartArea>
      <PriceChart />
      <PeriodWindow>
        <PeriodTitle>
          Период графика
          <CloseButton aria-label="Закрыть">x</CloseButton>
        </PeriodTitle>
        <PeriodRow>
          {periods.map((p) => (
            <PeriodButton key={p} $on={p === "M5"}>{p}</PeriodButton>
          ))}
        </PeriodRow>
      </PeriodWindow>
    </ChartArea>
    <ChartTabs>
      {chartTabs.map((t, i) => (
        <ChartTab key={i} $on={i === activeTab}>{t}</ChartTab>
      ))}
      <TabScroll>
        <Chevron d="M4 0v8L0 4z" w={4} h={8} color="#000" />
        <Chevron d="M0 0v8l4-4z" w={4} h={8} color="#888" />
      </TabScroll>
    </ChartTabs>
    <TerminalBox>
      <SideTitle>
        <SideClose aria-label="Закрыть">x</SideClose>
        <SideLabel>Терминал</SideLabel>
      </SideTitle>
      <TerminalMain>
        <TerminalBody>
          <HistoryTable>
            <Cols widths={historyCols} />
            <thead>
              <tr>
                {historyHeads.map((h, i) => (
                  <th key={i}>{h}</th>
                ))}
              </tr>
            </thead>
            <tbody>
              {history.map(([id, time, size, price, closed, closePrice]) => {
                const filled = size === "0.07";
                return (
                  <HistoryRow key={id} $selected={id === selectedOrder}>
                    <td>
                      <OrderId>
                        <OrderIcon />
                        {id}
                      </OrderId>
                    </td>
                    <td>2025.02.03 {time}</td>
                    <td>{filled ? "buy" : "buy limit"}</td>
                    <td>{size}</td>
                    <td>audcad</td>
                    <td>{price}</td>
                    <StopCell $hit={filled}>{filled ? "0.90012" : "0.00000"}</StopCell>
                    <td>0.00000</td>
                    <td>2025.02.14 {closed}</td>
                    <td>{closePrice}</td>
                    <td>{filled ? "-1.15" : ""}</td>
                    <td>{filled ? "17.93" : ""}</td>
                    <td>{filled ? "EA Limits Stops Orders 0[sl]" : "cancelled"}</td>
                  </HistoryRow>
                );
              })}
            </tbody>
            <tfoot>
              <tr>
                <td colSpan="11">
                  <OrderId>
                    <svg width="15" height="15" viewBox="0 0 15 15">
                      <circle cx="8" cy="8" r="3.5" fill="#ddd" stroke="#888" />
                      <path d="M6 10l4-4" stroke="#888" />
                    </svg>
                    Прибыль: 64.76&nbsp; Кредит: 0.00&nbsp; Депозит: 0.00&nbsp; Снятие: 0.00
                  </OrderId>
                </td>
                <td>64.76</td>
                <td />
              </tr>
            </tfoot>
          </HistoryTable>
          <ScrollTrack $w={17} $pad={6}>
            <Chevron d="M0 5l4-5 4 5v2L4 2 0 7z" w={8} h={7} />
            <ScrollEnd>
              <ScrollThumb $w={15} $h={17} />
              <Chevron d="M0 0l4 5 4-5v2L4 7 0 2z" w={8} h={7} />
            </ScrollEnd>
          </ScrollTrack>
        </TerminalBody>
        <BottomTabs>
          <BottomTab $w={73} aria-label="Торговля" />
          <BottomTab $w={61} aria-label="Средства" />
          <BottomTab $w={101} $on aria-label="История счета" />
          <BottomTab $w={80} aria-label="Новости" />
          <BottomTab $w={62} aria-label="Алерты" />
          <BottomTab $w={67} aria-label="Почта" />
        </BottomTabs>
      </TerminalMain>
    </TerminalBox>
  </TradePane>
);

const App = () => (
  <Desktop>
    <GlobalStyle />
    <Browser />
    <Trading />
  </Desktop>
);

export default App;
